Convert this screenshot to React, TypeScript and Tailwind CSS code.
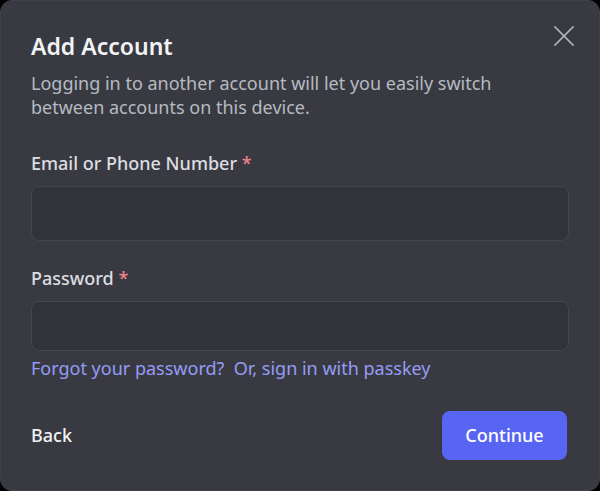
import React from "react";

export default function App() {
  const font = { fontFamily: '"Noto Sans", "Open Sans", sans-serif' };
  return (
    <div className="w-[600px] h-[491px] bg-black" style={font}>
      <div className="relative w-full h-full rounded-[12px] bg-[#393a41] border border-[#3f4047] flex flex-col px-[30px] pt-[30px]">
        <button className="absolute top-[25px] right-[25px] w-[20px] h-[20px] flex items-center justify-center">
          <svg width="20" height="20" viewBox="0 0 20 20" fill="none">
            <path d="M1 1L19 19M19 1L1 19" stroke="#b5bac1" strokeWidth="1.7" strokeLinecap="round" />
          </svg>
        </button>
        <h1 className="text-[23px] leading-[30px] font-semibold text-[#f2f3f5]">Add Account</h1>
        <p className="mt-[10px] text-[18px] leading-[24px] text-[#b5bac1] w-[480px]">
          Logging in to another account will let you easily switch between accounts on this device.
        </p>
        <label className="mt-[34px] text-[18px] leading-[20px] font-medium text-[#dbdee1]">
          Email or Phone Number <span className="text-[#f0848a]">*</span>
        </label>
        <div className="mt-[13px] h-[55px] w-full rounded-[8px] bg-[#313338] border border-[#45464d]" />
        <label className="mt-[27px] text-[18px] leading-[20px] font-medium text-[#dbdee1]">
          Password <span className="text-[#f0848a]">*</span>
        </label>
        <div className="mt-[13px] h-[50px] w-full rounded-[8px] bg-[#313338] border border-[#45464d]" />
        <div className="mt-[7px] text-[18px] leading-[20px] text-[#949cf7] whitespace-pre">
          {"Forgot your password?  Or, sign in with passkey"}
        </div>
        <div className="mt-[33px] flex items-center justify-between">
          <span className="text-[18px] font-medium text-[#f2f3f5]">Back</span>
          <button className="mr-[2px] w-[125px] h-[49px] rounded-[8px] bg-[#5865f2] text-white text-[18px] font-medium">
            Continue
          </button>
        </div>
      </div>
    </div>
  );
}
